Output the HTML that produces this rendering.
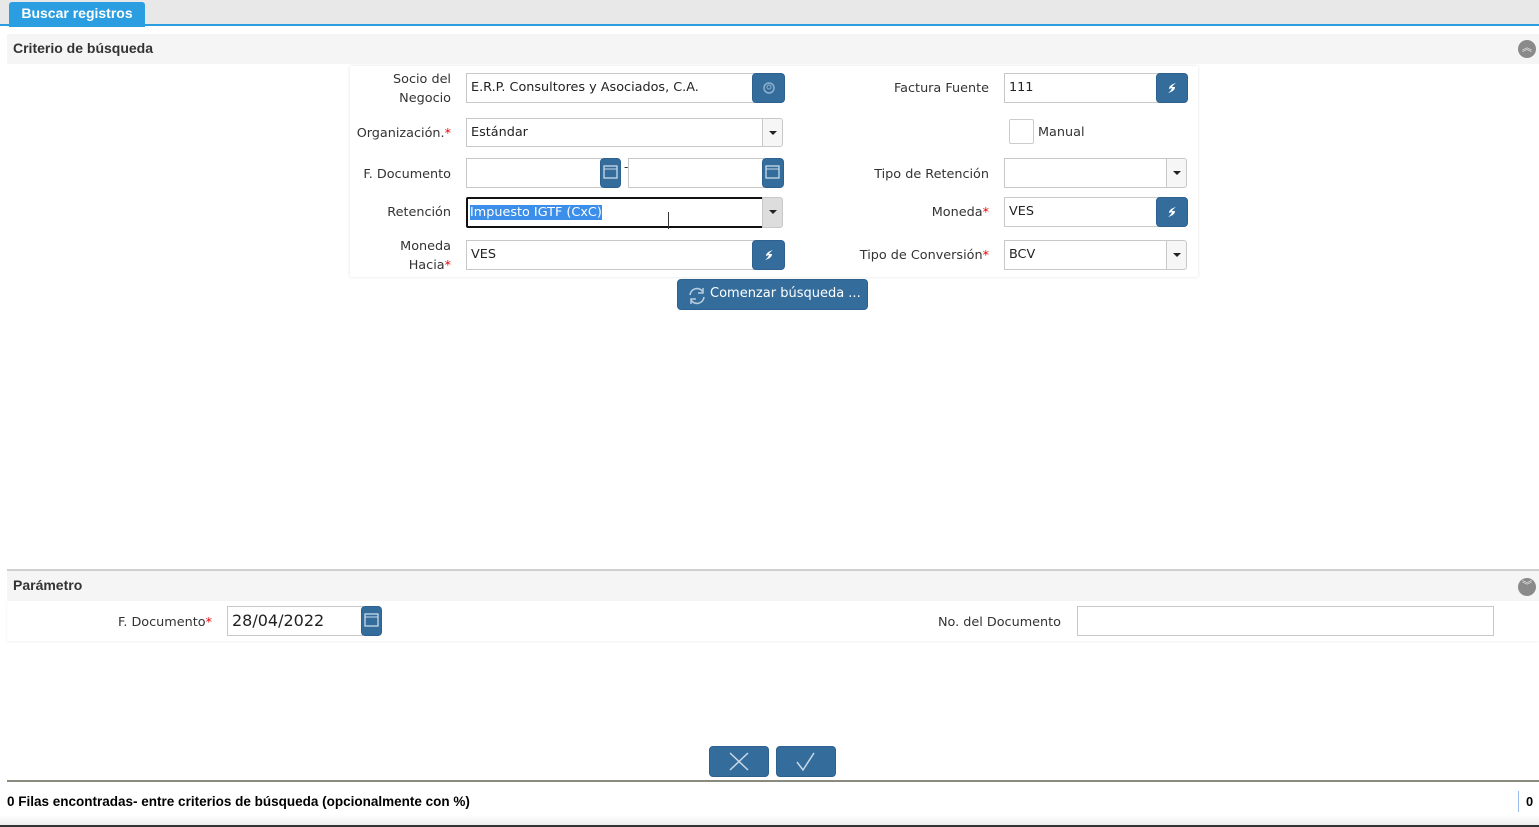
<!DOCTYPE html>
<html><head><meta charset="utf-8"><style>
*{box-sizing:border-box;margin:0;padding:0}
body{width:1539px;height:827px;position:relative;overflow:hidden;background:#fff;font-family:"DejaVu Sans","Liberation Sans",sans-serif;font-size:12.8px;color:#333}
.a{position:absolute}
.lbl{position:absolute;text-align:right;line-height:19px;color:#333}
.in{position:absolute;border:1px solid #c8c8c8;background:#fff;padding-left:4px;line-height:28px;color:#222;font-size:12.8px}
.btn{position:absolute;background:#346d9c;border-radius:4px;border:1px solid #2d6190}
.sel{position:absolute;border:1px solid #c8c8c8;border-radius:0 3px 3px 0;background:#f6f6f6;width:21px}
.sel:after{content:"";position:absolute;left:6px;top:12px;border-left:4px solid transparent;border-right:4px solid transparent;border-top:4px solid #222}
.req{color:#e00}
.hdr{position:absolute;left:7px;width:1532px;height:30px;background:#f5f5f5;font-family:"Liberation Sans",sans-serif;font-weight:bold;font-size:14px;color:#333;padding-left:6px;line-height:28px}
</style></head><body>
<div class="a" style="left:0;top:0;width:1539px;height:26px;background:#e8e8e8;border-bottom:2px solid #2a9ee0"></div>
<div class="a" style="left:9px;top:2px;width:136px;height:25px;background:#2a9ee0;border-radius:3px 3px 0 0;color:#fff;font-family:'Liberation Sans',sans-serif;font-weight:bold;font-size:14px;text-align:center;line-height:22px">Buscar registros</div>

<div class="hdr" style="top:34px">Criterio de búsqueda</div>
<div class="a" style="left:1518px;top:40px;width:18px;height:18px;border-radius:50%;background:#8a8a8a;color:#eee;font-size:10px;text-align:center;line-height:18px">︽</div>

<div class="a" style="left:350px;top:66px;width:848px;height:211px;background:#fff;box-shadow:0 0 3px rgba(0,0,0,.12)"></div>

<div class="lbl" style="left:300px;width:151px;top:70px">Socio del<br>Negocio</div>
<div class="in" style="left:466px;top:73px;width:290px;height:30px">E.R.P. Consultores y Asociados, C.A.</div>
<div class="btn" style="left:752px;top:73px;width:33px;height:30px"><svg width="31" height="28"><circle cx="16" cy="14" r="5" fill="none" stroke="#8fb0cc" stroke-width="1.5"/><circle cx="16" cy="13" r="2" fill="none" stroke="#8fb0cc"/></svg></div>

<div class="lbl" style="left:800px;width:189px;top:79px">Factura Fuente</div>
<div class="in" style="left:1004px;top:73px;width:156px;height:30px">111</div>
<div class="btn" style="left:1156px;top:73px;width:32px;height:30px"><svg width="30" height="28"><path d="M19 9 Q12 11 12 15 L15 14 Q14 17 11 19 Q18 17 18 13 L15 13 Q16 11 19 9Z" fill="#fff"/></svg></div>

<div class="lbl" style="left:300px;width:151px;top:124px">Organización.<span class="req">*</span></div>
<div class="in" style="left:466px;top:118px;width:298px;height:29px;line-height:28px">Estándar</div>
<div class="sel" style="left:762px;top:118px;height:29px"></div>
<div class="a" style="left:1009px;top:119px;width:25px;height:25px;border:1px solid #ccc;border-radius:2px;background:#fff"></div>
<div class="lbl" style="left:1038px;top:123px;text-align:left">Manual</div>

<div class="lbl" style="left:300px;width:151px;top:165px">F. Documento</div>
<div class="in" style="left:466px;top:158px;width:136px;height:30px"></div>
<div class="btn" style="left:600px;top:158px;width:21px;height:30px"><svg width="19" height="28"><rect x="3" y="7" width="13" height="12" fill="none" stroke="#c9d9e8" stroke-width="1.3"/><line x1="3" y1="10" x2="16" y2="10" stroke="#c9d9e8"/></svg></div>
<div class="a" style="left:624px;top:160px;font-size:12px">-</div>
<div class="in" style="left:628px;top:158px;width:136px;height:30px"></div>
<div class="btn" style="left:762px;top:158px;width:22px;height:30px"><svg width="20" height="28"><rect x="3" y="7" width="13" height="12" fill="none" stroke="#c9d9e8" stroke-width="1.3"/><line x1="3" y1="10" x2="16" y2="10" stroke="#c9d9e8"/></svg></div>

<div class="lbl" style="left:800px;width:189px;top:165px">Tipo de Retención</div>
<div class="in" style="left:1004px;top:158px;width:164px;height:30px"></div>
<div class="sel" style="left:1166px;top:158px;height:30px"></div>

<div class="lbl" style="left:300px;width:151px;top:203px">Retención</div>
<div class="in" style="left:466px;top:197px;width:298px;height:31px;border:2px solid #111;border-radius:2px;padding-left:2px;line-height:28px"><span style="background:#3b8eea;color:#fff">Impuesto IGTF (CxC)</span></div>
<div class="sel" style="left:762px;top:197px;height:31px;background:#ddd"></div>
<div class="a" style="left:667px;top:212px;width:3px;height:17px;border-left:1px solid #333;margin-left:1px"></div>

<div class="lbl" style="left:800px;width:189px;top:203px">Moneda<span class="req">*</span></div>
<div class="in" style="left:1004px;top:197px;width:156px;height:30px">VES</div>
<div class="btn" style="left:1156px;top:197px;width:32px;height:30px"><svg width="30" height="28"><path d="M19 9 Q12 11 12 15 L15 14 Q14 17 11 19 Q18 17 18 13 L15 13 Q16 11 19 9Z" fill="#fff"/></svg></div>

<div class="lbl" style="left:300px;width:151px;top:237px">Moneda<br>Hacia<span class="req">*</span></div>
<div class="in" style="left:466px;top:240px;width:290px;height:30px">VES</div>
<div class="btn" style="left:752px;top:240px;width:33px;height:30px"><svg width="31" height="28"><path d="M20 9 Q13 11 13 15 L16 14 Q15 17 12 19 Q19 17 19 13 L16 13 Q17 11 20 9Z" fill="#fff"/></svg></div>

<div class="lbl" style="left:800px;width:189px;top:246px">Tipo de Conversión<span class="req">*</span></div>
<div class="in" style="left:1004px;top:240px;width:164px;height:30px">BCV</div>
<div class="sel" style="left:1166px;top:240px;height:30px"></div>

<div class="btn" style="left:677px;top:279px;width:191px;height:31px;color:#fff;line-height:28px;padding-left:32px;font-size:13px;white-space:nowrap;overflow:hidden"><svg class="a" style="left:8px;top:5px" width="22" height="22" viewBox="0 0 22 22"><path d="M4 10 A7 7 0 0 1 17 7 M18 12 A7 7 0 0 1 5 15" fill="none" stroke="#b7cde0" stroke-width="1.6"/><path d="M17 3 L17 8 L12 8" fill="none" stroke="#b7cde0" stroke-width="1.5"/><path d="M5 19 L5 14 L10 14" fill="none" stroke="#b7cde0" stroke-width="1.5"/></svg>Comenzar búsqueda ...</div>

<div class="a" style="left:7px;top:569px;width:1532px;height:2px;background:#d0d0d0"></div>
<div class="hdr" style="top:571px">Parámetro</div>
<div class="a" style="left:1518px;top:578px;width:18px;height:18px;border-radius:50%;background:#8a8a8a;color:#eee;font-size:10px;text-align:center;line-height:18px">︾</div>
<div class="a" style="left:7px;top:601px;width:1532px;height:40px;box-shadow:0 1px 2px rgba(0,0,0,.06)"></div>

<div class="lbl" style="left:60px;width:152px;top:613px">F. Documento<span class="req">*</span></div>
<div class="in" style="left:227px;top:606px;width:136px;height:30px;font-size:16px;color:#222">28/04/2022</div>
<div class="btn" style="left:361px;top:606px;width:21px;height:30px"><svg width="19" height="28"><rect x="3" y="7" width="13" height="12" fill="none" stroke="#c9d9e8" stroke-width="1.3"/><line x1="3" y1="10" x2="16" y2="10" stroke="#c9d9e8"/></svg></div>
<div class="lbl" style="left:860px;width:201px;top:613px">No. del Documento</div>
<div class="in" style="left:1077px;top:606px;width:417px;height:30px"></div>

<div class="btn" style="left:709px;top:746px;width:60px;height:31px"><svg width="58" height="29"><path d="M20 6 L38 23 M38 6 L20 23" stroke="#c9d9e8" stroke-width="1.5"/></svg></div>
<div class="btn" style="left:776px;top:746px;width:60px;height:31px"><svg width="58" height="29"><path d="M20 15 L26 23 L37 6" fill="none" stroke="#c9d9e8" stroke-width="1.5"/></svg></div>

<div class="a" style="left:7px;top:780px;width:1532px;height:2px;background:#8a8a80"></div>
<div class="a" style="left:7px;top:792px;font-size:13.5px;color:#000;font-family:'Liberation Sans',sans-serif;font-weight:bold;line-height:19px">0 Filas encontradas- entre criterios de búsqueda (opcionalmente con %)</div>
<div class="a" style="left:1518px;top:791px;width:1px;height:21px;background:#9bbbe8"></div>
<div class="a" style="left:1526px;top:792px;font-weight:bold;color:#000;line-height:19px;font-family:'Liberation Sans',sans-serif">0</div>
<div class="a" style="left:0;top:815px;width:1539px;height:10px;background:linear-gradient(#fff,#eee)"></div>
<div class="a" style="left:0;top:825px;width:1539px;height:2px;background:#333"></div>
</body></html>
